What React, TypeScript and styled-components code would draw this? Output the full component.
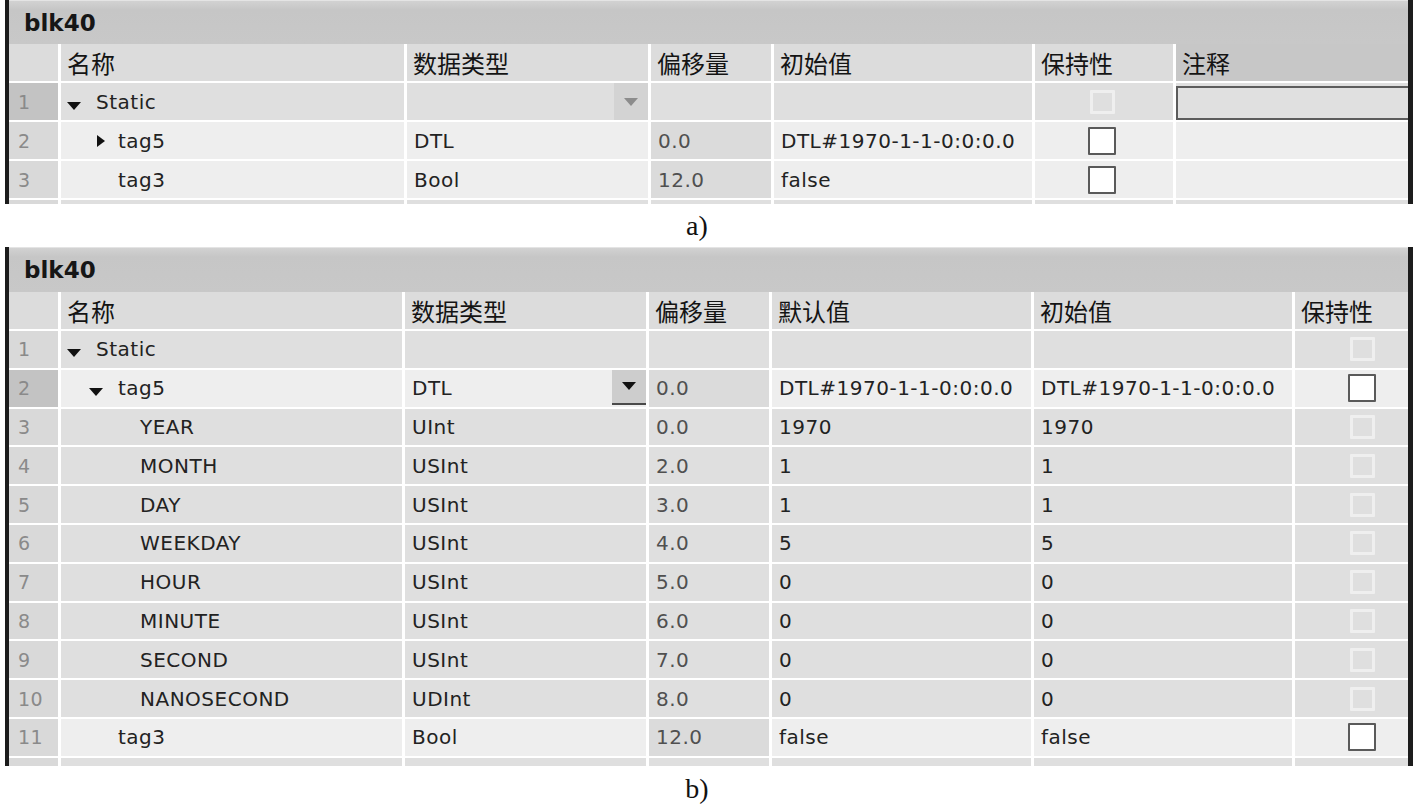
import React from 'react';
import styled, { createGlobalStyle } from 'styled-components';

const GlobalStyle = createGlobalStyle`
  html, body { margin: 0; padding: 0; background: #ffffff; }
  body {
    font-family: "DejaVu Sans", "Noto Sans CJK SC", sans-serif;
    color: #222;
    overflow: hidden;
  }
`;

const Page = styled.div`
  display: flex;
  flex-direction: column;
  padding: 0 4px 0 5px;
`;

const Table = styled.section`
  display: flex;
  flex-direction: column;
  border-left: 4px solid #1c1c1c;
  border-right: 5px solid #1c1c1c;
  background: #ffffff;
`;

const Title = styled.div<{ $h: number }>`
  height: ${p => p.$h}px;
  box-sizing: border-box;
  display: flex;
  align-items: center;
  padding-left: 15px;
  background: linear-gradient(#d2d2d2, #c6c6c6 20%, #c8c8c8);
  border-top: 1px solid #e4e4e4;
  font-family: "DejaVu Sans", sans-serif;
  font-weight: bold;
  font-size: 23px;
  color: #161616;
`;

const Body = styled.div`
  display: flex;
  flex-direction: column;
  gap: 2px;
`;

const Row = styled.div<{ $cols: string; $h: number }>`
  display: grid;
  grid-template-columns: ${p => p.$cols};
  column-gap: 3px;
  height: ${p => p.$h}px;
`;

type Tone = 'header' | 'headerDark' | 'gray' | 'light' | 'num' | 'numSel' | 'ro';

const toneBg: Record<Tone, string> = {
  header: '#dcdcdc',
  headerDark: '#c7c7c7',
  gray: '#dfdfdf',
  light: '#eeeeee',
  num: '#d9d9d9',
  numSel: '#c3c3c3',
  ro: '#dbdbdb',
};

const Cell = styled.div<{ $tone: Tone; $pad?: number }>`
  display: flex;
  align-items: center;
  min-width: 0;
  overflow: hidden;
  white-space: nowrap;
  box-sizing: border-box;
  padding-left: ${p => p.$pad ?? 7}px;
  background: ${p => toneBg[p.$tone]};
  font-size: 20px;
  letter-spacing: 0.5px;
  color: #222;
`;

const HeadText = styled.span`
  font-family: "Noto Sans CJK SC", sans-serif;
  font-size: 24px;
  letter-spacing: 0;
  color: #141414;
`;

const NumText = styled.span`
  font-size: 19px;
  color: #8a8a8a;
`;

const OffsetText = styled.span`
  color: #505050;
`;

const Toggle = styled.span`
  display: flex;
  width: 29px;
  flex: none;
  align-items: center;
`;

const TriDown = styled.span<{ $c?: string }>`
  width: 0;
  height: 0;
  border-left: 7px solid transparent;
  border-right: 7px solid transparent;
  border-top: 8px solid ${p => p.$c ?? '#111'};
  margin-top: 8px;
`;

const TriRight = styled.span`
  width: 0;
  height: 0;
  margin-left: 8px;
  border-top: 6.5px solid transparent;
  border-bottom: 6.5px solid transparent;
  border-left: 8px solid #111;
`;

const DropBtn = styled.span<{ $active?: boolean }>`
  margin-left: auto;
  align-self: flex-start;
  width: 34px;
  height: ${p => (p.$active ? 33 : 37)}px;
  display: flex;
  align-items: center;
  justify-content: center;
  background: ${p => (p.$active ? '#cdcdcd' : '#d3d3d3')};
  border-bottom: ${p => (p.$active ? '2px solid #4a4a4a' : 'none')};
  & > span { margin-top: 0; }
`;

const Check = styled.span<{ $dark?: boolean }>`
  box-sizing: border-box;
  display: block;
  width: ${p => (p.$dark ? 28 : 25)}px;
  height: ${p => (p.$dark ? 28 : 24)}px;
  margin-left: ${p => (p.$dark ? 53 : 55)}px;
  border: ${p => (p.$dark ? '2px solid #5a5a5a' : '3px solid #efefef')};
  background: ${p => (p.$dark ? '#ffffff' : 'transparent')};
  border-radius: 1px;
`;

const EditBox = styled.span`
  align-self: stretch;
  flex: 1;
  margin-top: 3px;
  border: 2px solid #5c5c5c;
  border-right: none;
  background: #e0e0e0;
`;

const Caption = styled.div<{ $h: number; $shift?: number }>`
  height: ${p => p.$h}px;
  box-sizing: border-box;
  padding-top: ${p => p.$shift ?? 0}px;
  display: flex;
  align-items: center;
  justify-content: center;
  padding-right: 24px;
  font-family: "Liberation Serif", serif;
  font-size: 28px;
  color: #111;
`;

type Kind = 'num' | 'name' | 'type' | 'offset' | 'text' | 'check' | 'comment';

interface RowData {
  n: number;
  sel?: boolean;
  light?: boolean;
  level: number;
  toggle?: 'down' | 'right';
  name: string;
  type: string;
  drop?: 'faint' | 'active';
  offset: string;
  values: string[];
  check: 'faint' | 'dark';
  edit?: boolean;
}

interface TableSpec {
  cols: string;
  kinds: Kind[];
  headers: string[];
  darkHeader?: number;
  titleH: number;
  rowH: number;
  partialH: number;
  rows: RowData[];
}

function renderRow(spec: TableSpec, r: RowData) {
  const tone: Tone = r.light ? 'light' : 'gray';
  let vi = 0;
  return (
    <Row key={r.n} $cols={spec.cols} $h={spec.rowH}>
      {spec.kinds.map((k, i) => {
        switch (k) {
          case 'num':
            return (
              <Cell key={i} $tone={r.sel ? 'numSel' : 'num'} $pad={9}>
                <NumText>{r.n}</NumText>
              </Cell>
            );
          case 'name':
            return (
              <Cell key={i} $tone={tone} $pad={6 + r.level * 22}>
                <Toggle>
                  {r.toggle === 'down' && <TriDown />}
                  {r.toggle === 'right' && <TriRight />}
                </Toggle>
                <span>{r.name}</span>
              </Cell>
            );
          case 'type':
            return (
              <Cell key={i} $tone={tone}>
                <span>{r.type}</span>
                {r.drop && (
                  <DropBtn $active={r.drop === 'active'}>
                    <TriDown $c={r.drop === 'active' ? '#111' : '#8c8c8c'} />
                  </DropBtn>
                )}
              </Cell>
            );
          case 'offset':
            return (
              <Cell key={i} $tone={r.light ? 'ro' : tone}>
                <OffsetText>{r.offset}</OffsetText>
              </Cell>
            );
          case 'text': {
            const v = r.values[vi++];
            return (
              <Cell key={i} $tone={tone}>
                <span>{v}</span>
              </Cell>
            );
          }
          case 'check':
            return (
              <Cell key={i} $tone={tone} $pad={0}>
                <Check $dark={r.check === 'dark'} />
              </Cell>
            );
          case 'comment':
            return (
              <Cell key={i} $tone={tone} $pad={0}>
                {r.edit && <EditBox />}
              </Cell>
            );
          default:
            return null;
        }
      })}
    </Row>
  );
}

function BlockTable({ spec }: { spec: TableSpec }) {
  return (
    <Table>
      <Title $h={spec.titleH}>blk40</Title>
      <Body>
        <Row $cols={spec.cols} $h={37}>
          {spec.headers.map((h, i) => (
            <Cell key={i} $tone={spec.darkHeader === i ? 'headerDark' : 'header'} $pad={6}>
              <HeadText>{h}</HeadText>
            </Cell>
          ))}
        </Row>
        {spec.rows.map(r => renderRow(spec, r))}
        <Row $cols={spec.cols} $h={spec.partialH}>
          {spec.kinds.map((k, i) => (
            <Cell key={i} $tone={k === 'num' ? 'num' : 'gray'} />
          ))}
        </Row>
      </Body>
    </Table>
  );
}

const tableA: TableSpec = {
  cols: '49px 343px 241px 120px 258px 138px 1fr',
  kinds: ['num', 'name', 'type', 'offset', 'text', 'check', 'comment'],
  headers: ['', '名称', '数据类型', '偏移量', '初始值', '保持性', '注释'],
  darkHeader: 6,
  titleH: 44,
  rowH: 37,
  partialH: 4,
  rows: [
    { n: 1, sel: true, level: 0, toggle: 'down', name: 'Static', type: '', drop: 'faint', offset: '', values: [''], check: 'faint', edit: true },
    { n: 2, light: true, level: 1, toggle: 'right', name: 'tag5', type: 'DTL', offset: '0.0', values: ['DTL#1970-1-1-0:0:0.0'], check: 'dark' },
    { n: 3, light: true, level: 1, name: 'tag3', type: 'Bool', offset: '12.0', values: ['false'], check: 'dark' },
  ],
};

const child = (n: number, name: string, type: string, offset: string, v: string): RowData => ({
  n, level: 2, name, type, offset, values: [v, v], check: 'faint',
});

const tableB: TableSpec = {
  cols: '49px 341px 241px 120px 259px 258px 1fr',
  kinds: ['num', 'name', 'type', 'offset', 'text', 'text', 'check'],
  headers: ['', '名称', '数据类型', '偏移量', '默认值', '初始值', '保持性'],
  titleH: 45,
  rowH: 36.8,
  partialH: 8,
  rows: [
    { n: 1, level: 0, toggle: 'down', name: 'Static', type: '', offset: '', values: ['', ''], check: 'faint' },
    { n: 2, sel: true, light: true, level: 1, toggle: 'down', name: 'tag5', type: 'DTL', drop: 'active', offset: '0.0', values: ['DTL#1970-1-1-0:0:0.0', 'DTL#1970-1-1-0:0:0.0'], check: 'dark' },
    child(3, 'YEAR', 'UInt', '0.0', '1970'),
    child(4, 'MONTH', 'USInt', '2.0', '1'),
    child(5, 'DAY', 'USInt', '3.0', '1'),
    child(6, 'WEEKDAY', 'USInt', '4.0', '5'),
    child(7, 'HOUR', 'USInt', '5.0', '0'),
    child(8, 'MINUTE', 'USInt', '6.0', '0'),
    child(9, 'SECOND', 'USInt', '7.0', '0'),
    child(10, 'NANOSECOND', 'UDInt', '8.0', '0'),
    { n: 11, light: true, level: 1, name: 'tag3', type: 'Bool', offset: '12.0', values: ['false', 'false'], check: 'dark' },
  ],
};

export default function App() {
  return (
    <>
      <GlobalStyle />
      <Page>
        <BlockTable spec={tableA} />
        <Caption $h={43}>a)</Caption>
        <BlockTable spec={tableB} />
        <Caption $h={40} $shift={7}>b)</Caption>
      </Page>
    </>
  );
}
